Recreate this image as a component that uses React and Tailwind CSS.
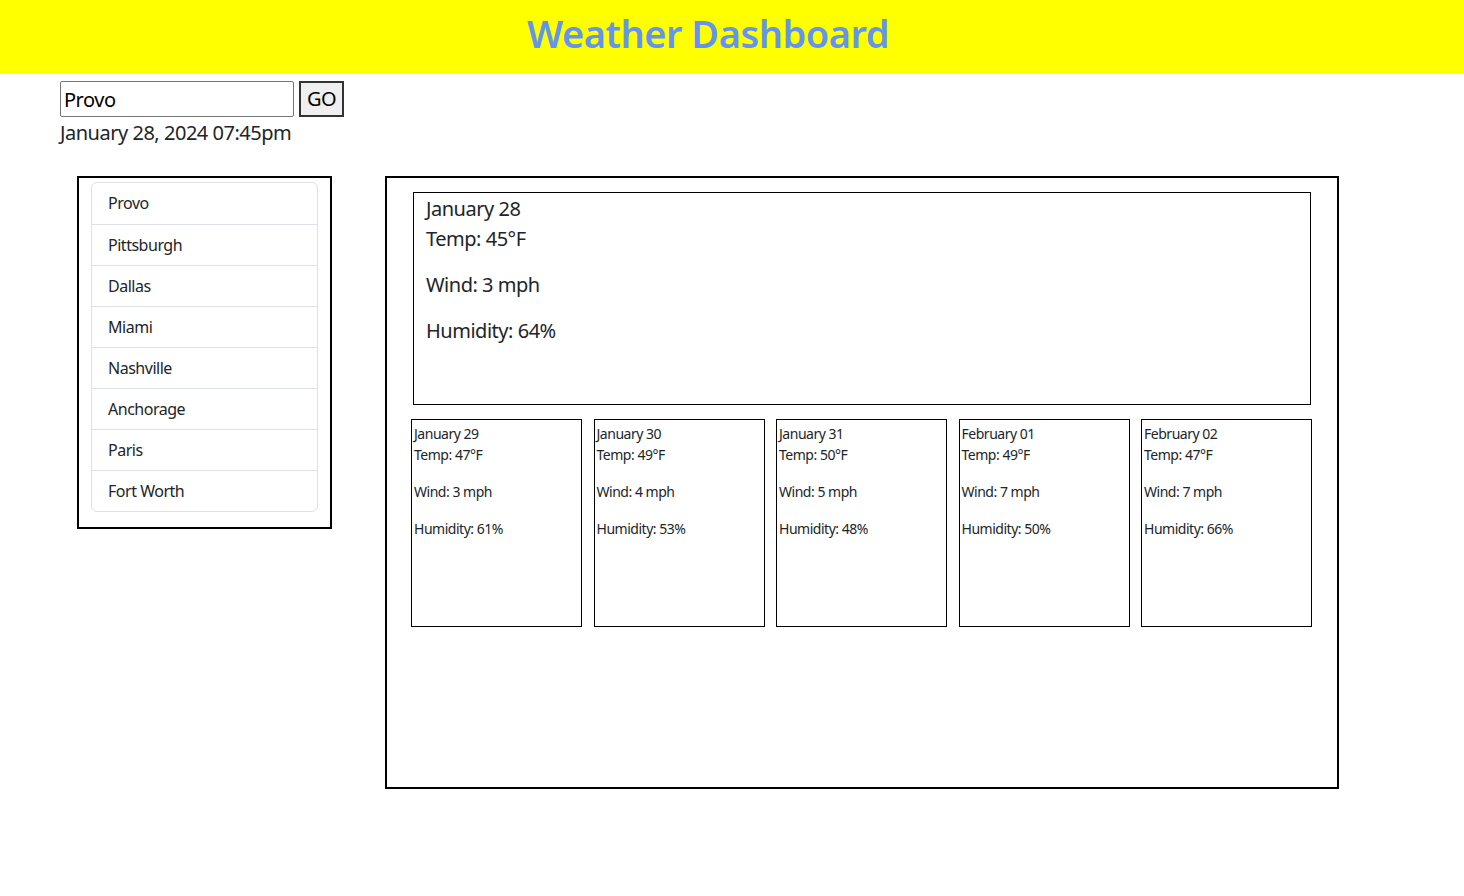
import React from 'react';

const cities = ['Provo', 'Pittsburgh', 'Dallas', 'Miami', 'Nashville', 'Anchorage', 'Paris', 'Fort Worth'];

const forecast = [
  { date: 'January 29', temp: 47, wind: 3, humidity: 61 },
  { date: 'January 30', temp: 49, wind: 4, humidity: 53 },
  { date: 'January 31', temp: 50, wind: 5, humidity: 48 },
  { date: 'February 01', temp: 49, wind: 7, humidity: 50 },
  { date: 'February 02', temp: 47, wind: 7, humidity: 66 },
];

const font = { fontFamily: '"Segoe UI", "Noto Sans", sans-serif' };

export default function App() {
  return (
    <div className="min-h-[896px] bg-white text-[#212529] text-base leading-normal tracking-[-0.03em]" style={font}>
      {/* Header */}
      <header className="h-[74px] bg-[#ffff00] flex items-center justify-center pr-[48px] pb-[6px]">
        <h1 className="text-[38px] font-semibold leading-tight text-[#6495ed]">Weather Dashboard</h1>
      </header>

      {/* Search */}
      <div className="pl-[60px] pt-[7px]">
        <div className="flex items-center gap-[5px]">
          <input
            defaultValue="Provo"
            className="w-[234px] h-[36px] border border-[#767676] rounded-[2px] px-[3px] text-[20px] text-black outline-none"
          />
          <button className="h-[36px] px-[6px] border-2 border-[#333] bg-[#efefef] text-[20px] text-black">GO</button>
        </div>
        <p className="text-[20px] leading-[30px] mt-[1px]">January 28, 2024 07:45pm</p>
      </div>

      <div className="flex items-start mt-[28px] pl-[77px]">
        {/* Saved cities */}
        <div className="w-[255px] border-2 border-black pt-1 px-3 pb-[15px]">
          <ul className="border border-[#dee2e6] rounded-[6px] overflow-hidden">
            {cities.map((c, i) => (
              <li
                key={c}
                className={`px-4 py-2 h-[41px] text-base leading-6 ${i > 0 ? 'border-t border-[#dee2e6]' : ''}`}
              >
                {c}
              </li>
            ))}
          </ul>
        </div>

        {/* Weather */}
        <div className="ml-[53px] w-[954px] h-[613px] border-2 border-black pt-[14px] pl-[24px] pr-[24px]">
          <div className="ml-[2px] mr-[2px] h-[213px] border border-black pl-3 pt-[1px]">
            <h2 className="text-[20px] leading-[30px]">January 28</h2>
            <p className="text-[20px] leading-[30px] mb-4">Temp: 45°F</p>
            <p className="text-[20px] leading-[30px] mb-4">Wind: 3 mph</p>
            <p className="text-[20px] leading-[30px]">Humidity: 64%</p>
          </div>

          <div className="mt-[14px] flex gap-[11.5px]">
            {forecast.map((d) => (
              <div key={d.date} className="w-[171px] h-[208px] border border-black pl-[2px] pt-[3px] text-[14px] leading-[21px]">
                <h3>{d.date}</h3>
                <p className="mb-4">Temp: {d.temp}°F</p>
                <p className="mb-4">Wind: {d.wind} mph</p>
                <p>Humidity: {d.humidity}%</p>
              </div>
            ))}
          </div>
        </div>
      </div>
    </div>
  );
}
